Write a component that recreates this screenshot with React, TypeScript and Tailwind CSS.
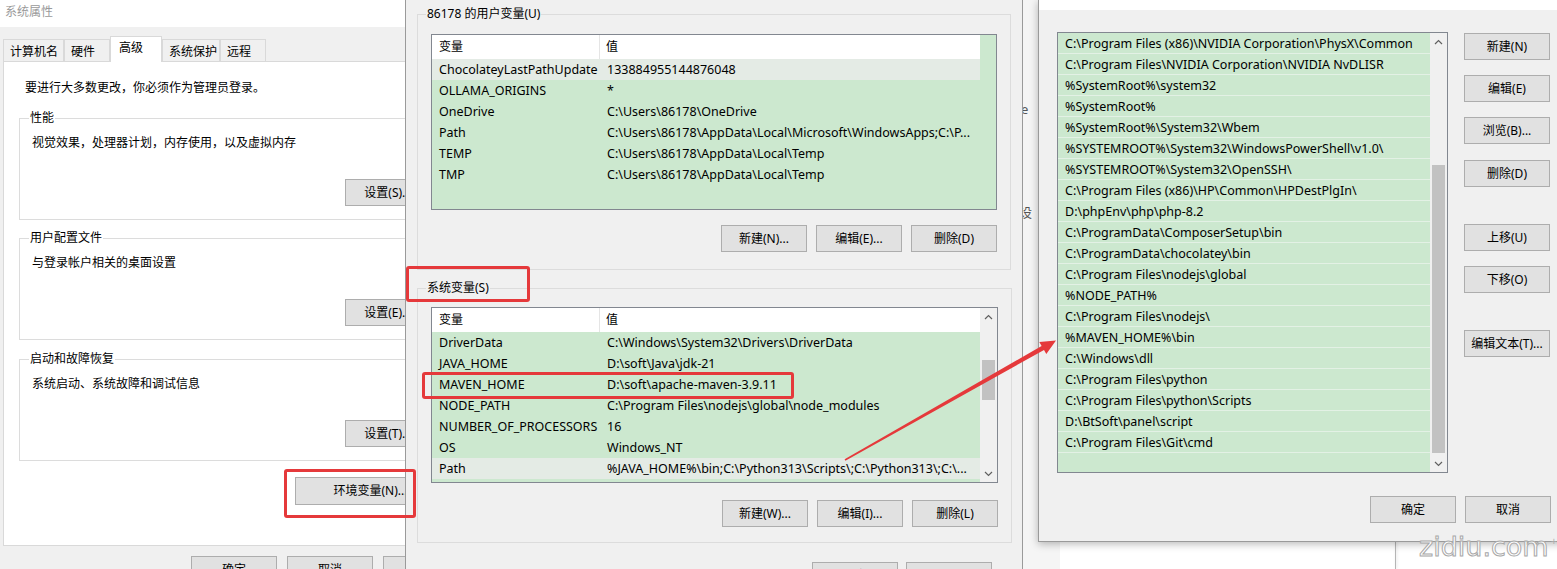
import React from "react"

const userVars: [string, string][] = [
  ["ChocolateyLastPathUpdate", "133884955144876048"],
  ["OLLAMA_ORIGINS", "*"],
  ["OneDrive", "C:\\Users\\86178\\OneDrive"],
  ["Path", "C:\\Users\\86178\\AppData\\Local\\Microsoft\\WindowsApps;C:\\P..."],
  ["TEMP", "C:\\Users\\86178\\AppData\\Local\\Temp"],
  ["TMP", "C:\\Users\\86178\\AppData\\Local\\Temp"],
]

const sysVars: [string, string][] = [
  ["DriverData", "C:\\Windows\\System32\\Drivers\\DriverData"],
  ["JAVA_HOME", "D:\\soft\\Java\\jdk-21"],
  ["MAVEN_HOME", "D:\\soft\\apache-maven-3.9.11"],
  ["NODE_PATH", "C:\\Program Files\\nodejs\\global\\node_modules"],
  ["NUMBER_OF_PROCESSORS", "16"],
  ["OS", "Windows_NT"],
  ["Path", "%JAVA_HOME%\\bin;C:\\Python313\\Scripts\\;C:\\Python313\\;C:\\..."],
]

const pathEntries = [
  "C:\\Program Files (x86)\\NVIDIA Corporation\\PhysX\\Common",
  "C:\\Program Files\\NVIDIA Corporation\\NVIDIA NvDLISR",
  "%SystemRoot%\\system32",
  "%SystemRoot%",
  "%SystemRoot%\\System32\\Wbem",
  "%SYSTEMROOT%\\System32\\WindowsPowerShell\\v1.0\\",
  "%SYSTEMROOT%\\System32\\OpenSSH\\",
  "C:\\Program Files (x86)\\HP\\Common\\HPDestPlgIn\\",
  "D:\\phpEnv\\php\\php-8.2",
  "C:\\ProgramData\\ComposerSetup\\bin",
  "C:\\ProgramData\\chocolatey\\bin",
  "C:\\Program Files\\nodejs\\global",
  "%NODE_PATH%",
  "C:\\Program Files\\nodejs\\",
  "%MAVEN_HOME%\\bin",
  "C:\\Windows\\dll",
  "C:\\Program Files\\python",
  "C:\\Program Files\\python\\Scripts",
  "D:\\BtSoft\\panel\\script",
  "C:\\Program Files\\Git\\cmd",
]

function Btn({ children, className = "" }: { children: React.ReactNode; className?: string }) {
  return (
    <div
      className={`flex h-[27px] w-[86px] shrink-0 items-center justify-center border border-[#adadad] bg-[#e1e1e1] text-[12px] whitespace-nowrap ${className}`}
    >
      {children}
    </div>
  )
}

function Chevron({ up }: { up?: boolean }) {
  return (
    <svg width="9" height="6" viewBox="0 0 9 6">
      <polyline
        points={up ? "1,5 4.5,1.5 8,5" : "1,1 4.5,4.5 8,1"}
        fill="none"
        stroke="#606060"
        strokeWidth="1.2"
      />
    </svg>
  )
}

// vertical scrollbar: arrow, gap, thumb, rest, arrow
function ScrollBar({ offset, thumb }: { offset: number; thumb: number }) {
  return (
    <div className="flex h-full w-[17px] shrink-0 flex-col bg-[#f0f0f0]">
      <div className="flex h-[17px] shrink-0 items-center justify-center">
        <Chevron up />
      </div>
      <div className="shrink-0" style={{ height: offset }} />
      <div className="mx-[2px] shrink-0 bg-[#c2c2c2]" style={{ height: thumb }} />
      <div className="flex-1" />
      <div className="flex h-[17px] shrink-0 items-center justify-center">
        <Chevron />
      </div>
    </div>
  )
}

function VarList({ rows, hl, scroll }: { rows: [string, string][]; hl: number; scroll?: boolean }) {
  return (
    <div className="flex h-[176px] border border-[#828790] bg-[#cce8cf]">
      <div className="w-[548px] shrink-0 overflow-hidden">
        <div className="flex h-[24px] bg-white">
          <div className="flex w-[168px] items-center border-r border-[#e5e5e5] pl-[7px]">变量</div>
          <div className="flex items-center pl-[6px]">值</div>
        </div>
        {rows.map(([k, v], i) => (
          <div
            key={k}
            className={`flex h-[21px] items-center pt-[2px] text-[12.5px] ${i === hl ? "bg-[#e4ebe5]" : ""}`}
          >
            <div className="w-[168px] shrink-0 overflow-hidden whitespace-nowrap pl-[7px]">{k}</div>
            <div className="whitespace-nowrap pl-[7px]">{v}</div>
          </div>
        ))}
      </div>
      <div className="flex-1" />
      {scroll && <ScrollBar offset={35} thumb={40} />}
    </div>
  )
}

function Group({ title, children }: { title: string; children: React.ReactNode }) {
  return (
    <fieldset className="mx-[15px] border border-[#dcdcdc] px-[9px] pb-[13px]">
      <legend className="px-[1px] leading-[16px]">{title}</legend>
      {children}
    </fieldset>
  )
}

function SystemProps() {
  const tabs = [
    { t: "计算机名", w: "w-[61px]" },
    { t: "硬件", w: "w-[46px]" },
    { t: "高级", w: "w-[52px]", on: true },
    { t: "系统保护", w: "w-[58px]" },
    { t: "远程", w: "w-[46px]" },
  ]
  return (
    <div className="absolute left-0 top-0 flex h-[600px] w-[480px] flex-col bg-[#f0f0f0]">
      <div className="h-[27px] bg-white pl-[5px] pt-[4px] leading-[16px] text-[#9a9a9a]">系统属性</div>
      <div className="mt-[9px] flex h-[25px] items-end pl-[3px]">
        {tabs.map((tab) =>
          tab.on ? (
            <div
              key={tab.t}
              className={`relative z-10 -mb-px h-[26px] ${tab.w} border border-b-0 border-[#d9d9d9] bg-white pl-[8px] pt-[3px] leading-[16px]`}
            >
              {tab.t}
            </div>
          ) : (
            <div
              key={tab.t}
              className={`h-[22px] ${tab.w} border border-b-0 border-[#d9d9d9] bg-[#f0f0f0] pl-[6px] pt-[4px] leading-[16px]`}
            >
              {tab.t}
            </div>
          )
        )}
      </div>
      <div className="ml-[3px] flex h-[485px] w-[454px] flex-col border border-[#d9d9d9] bg-white pt-[18px]">
        <div className="pl-[21px] leading-[16px]">要进行大多数更改，你必须作为管理员登录。</div>
        <div className="mt-[14px]">
          <Group title="性能">
            <div className="ml-[3px] mt-[9px] leading-[16px]">视觉效果，处理器计划，内存使用，以及虚拟内存</div>
            <div className="mt-[28px] flex justify-end">
              <Btn>设置(S)...</Btn>
            </div>
          </Group>
        </div>
        <div className="mt-[10px]">
          <Group title="用户配置文件">
            <div className="ml-[3px] mt-[9px] leading-[16px]">与登录帐户相关的桌面设置</div>
            <div className="mt-[28px] flex justify-end">
              <Btn>设置(E)...</Btn>
            </div>
          </Group>
        </div>
        <div className="mt-[11px]">
          <Group title="启动和故障恢复">
            <div className="ml-[3px] mt-[9px] leading-[16px]">系统启动、系统故障和调试信息</div>
            <div className="mt-[28px] flex justify-end">
              <Btn>设置(T)...</Btn>
            </div>
          </Group>
        </div>
        <div className="mr-[10px] mt-[16px] flex justify-end">
          <Btn className="h-[28px] w-[151px]">环境变量(N)...</Btn>
        </div>
      </div>
      <div className="mt-[10px] flex gap-[10px] pl-[191px]">
        <Btn>确定</Btn>
        <Btn>取消</Btn>
        <Btn>应用(A)</Btn>
      </div>
    </div>
  )
}

function EnvVars() {
  return (
    <div className="absolute left-[405px] top-0 flex h-[600px] w-[618px] flex-col border-x border-[#9a9a9a] bg-[#f0f0f0] pt-[6px]">
      <fieldset className="ml-[11px] w-[594px] border border-[#dcdcdc] px-[13px] pb-[17px]">
        <legend className="-ml-[5px] px-[1px] leading-[16px]">86178 的用户变量(U)</legend>
        <div className="mt-[12px]">
          <VarList rows={userVars} hl={0} />
        </div>
        <div className="mt-[15px] flex justify-end gap-[9px]">
          <Btn>新建(N)...</Btn>
          <Btn>编辑(E)...</Btn>
          <Btn>删除(D)</Btn>
        </div>
      </fieldset>
      <fieldset className="ml-[11px] mt-[10px] w-[594px] border border-[#dcdcdc] px-[13px] pb-[15px]">
        <legend className="-ml-[5px] px-[1px] leading-[16px]">系统变量(S)</legend>
        <div className="mt-[11px]">
          <VarList rows={sysVars} hl={6} scroll />
        </div>
        <div className="mt-[17px] flex justify-end gap-[9px]">
          <Btn>新建(W)...</Btn>
          <Btn>编辑(I)...</Btn>
          <Btn>删除(L)</Btn>
        </div>
      </fieldset>
      <div className="mt-[19px] flex justify-end gap-[8px] pr-[30px]">
        <Btn>确定</Btn>
        <Btn>取消</Btn>
      </div>
    </div>
  )
}

function EditPath() {
  const gaps = ["", "mt-[15px]", "mt-[15px]", "mt-[16px]", "mt-[37px]", "mt-[15px]", "mt-[37px]"]
  const labels = ["新建(N)", "编辑(E)", "浏览(B)...", "删除(D)", "上移(U)", "下移(O)", "编辑文本(T)..."]
  return (
    <div className="absolute left-[1038px] top-0 flex h-[542px] w-[540px] flex-col border-b border-l border-[#9a9a9a] bg-[#f0f0f0] shadow-[0_2px_8px_rgba(0,0,0,0.28)]">
      <div className="h-[10px] bg-white" />
      <div className="mt-[22px] flex">
        <div className="ml-[18px] flex h-[441px] w-[391px] border border-[#828790] bg-[#cce8cf]">
          <div className="flex-1">
            {pathEntries.map((p) => (
              <div
                key={p}
                className="flex h-[21px] items-center border-b border-[#e3f1e5] pl-[7px] pt-[2px] text-[12.5px] whitespace-nowrap"
              >
                {p}
              </div>
            ))}
          </div>
          <ScrollBar offset={115} thumb={288} />
        </div>
        <div className="ml-[16px] flex flex-col pt-[1px]">
          {labels.map((l, i) => (
            <Btn key={l} className={gaps[i]}>
              {l}
            </Btn>
          ))}
        </div>
      </div>
      <div className="mt-[23px] flex gap-[9px] pl-[331px]">
        <Btn>确定</Btn>
        <Btn>取消</Btn>
      </div>
    </div>
  )
}

function Mark({ className }: { className: string }) {
  return <div className={`pointer-events-none absolute rounded-[3px] border-[3px] border-[#e5393b] ${className}`} />
}

export default function App() {
  return (
    <div className="relative h-[569px] w-[1557px] overflow-hidden bg-white font-['Noto_Sans','Noto_Sans_CJK_SC',sans-serif] text-[12px] text-black">
      {/* window behind, peeking out between the dialogs */}
      <div className="absolute left-[1000px] top-0 h-[569px] w-[60px] bg-[#f5f5f5]">
        <span className="absolute left-[21px] top-[100px] text-[13px] text-[#555]">e</span>
        <span className="absolute left-[19px] top-[203px] text-[13px] text-[#555]">设</span>
      </div>
      <div className="absolute left-[1395px] top-[541px] h-[28px] w-px bg-[#b5b5b5] shadow-[1px_0_3px_rgba(0,0,0,0.15)]" />

      <SystemProps />
      <EnvVars />
      <EditPath />

      <Mark className="left-[284px] top-[469px] h-[49px] w-[132px]" />
      <Mark className="left-[406px] top-[266px] h-[36px] w-[124px]" />
      <Mark className="left-[422px] top-[372px] h-[27px] w-[372px]" />

      <svg className="pointer-events-none absolute left-0 top-0" width="1557" height="569">
        <polygon
          points="844.6,459.3 1041.6,345.9 1039.3,341.9 1056,340.5 1046.3,353.9 1044,349.9 845.4,460.7"
          fill="#e5393b"
        />
      </svg>

      <div className="pointer-events-none absolute left-[1419px] top-[527px] font-['DejaVu_Sans',sans-serif] text-[27px] text-white [-webkit-text-stroke:1px_#a8a8a8]">
        zidiu.com
      </div>
      <div className="absolute left-[1551px] top-[534px] text-[10px] text-[#aaa]">+</div>
    </div>
  )
}
